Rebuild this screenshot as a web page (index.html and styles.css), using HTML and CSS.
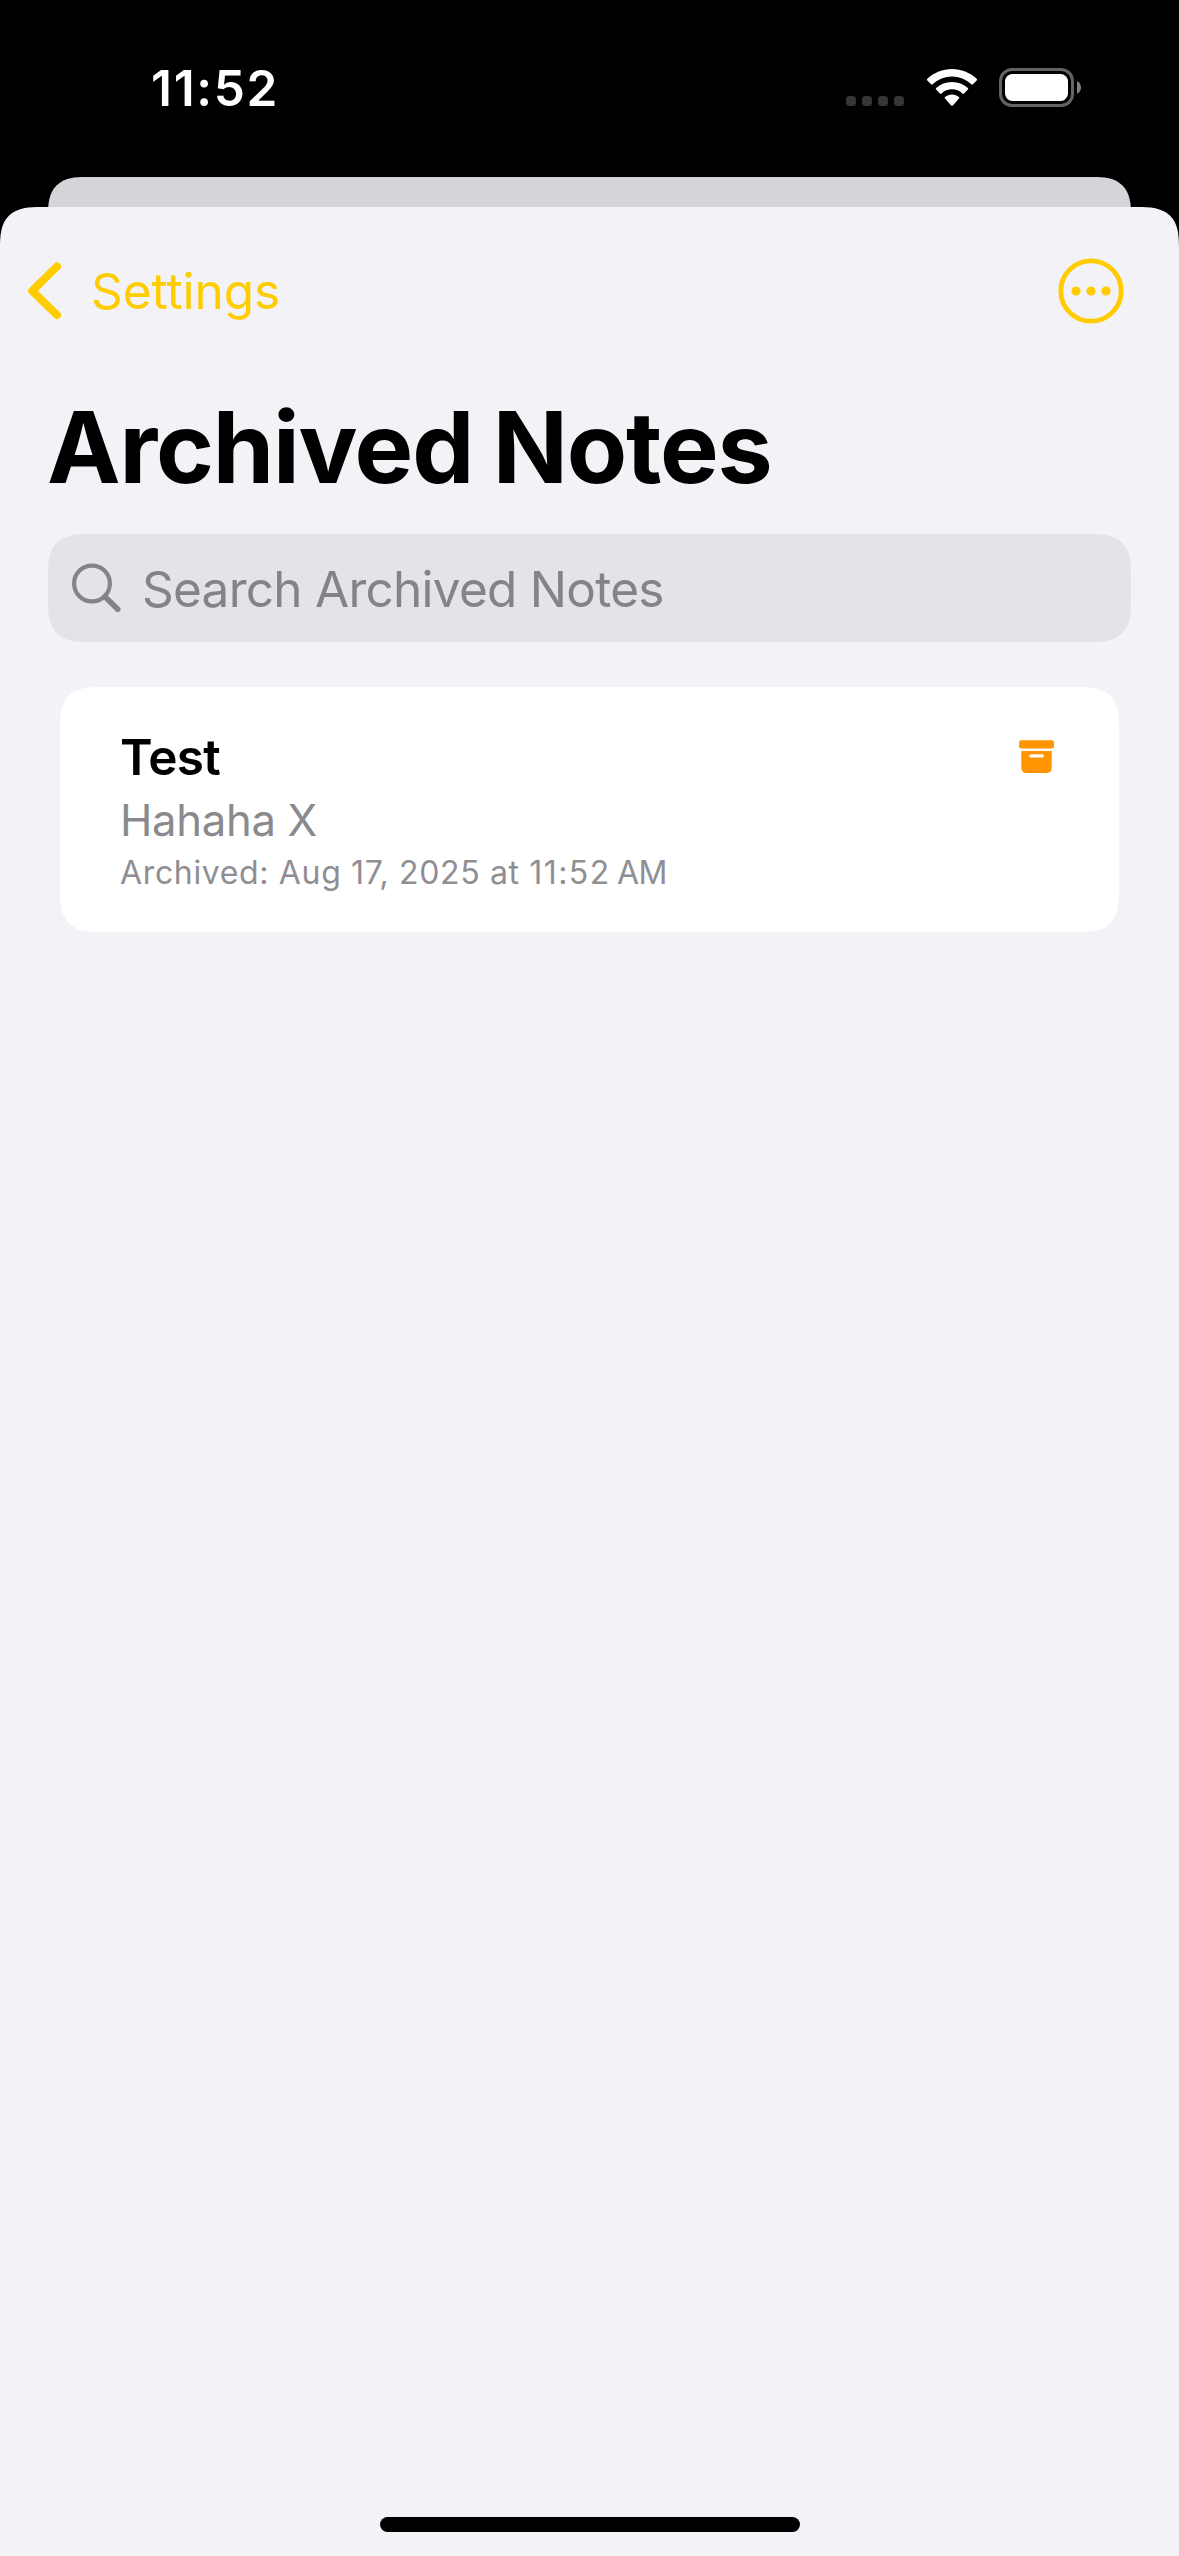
FILE: index.html
```html
<!DOCTYPE html>
<html lang="en">
<head>
<meta charset="utf-8">
<title>Archived Notes</title>
<link rel="stylesheet" href="styles.css">
</head>
<body>
<div class="screen">
  <header class="status-bar">
    <time class="clock">11:52</time>
    <div class="indicators">
      <div class="signal"><i></i><i></i><i></i><i></i></div>
      <svg class="wifi" width="52" height="38" viewBox="0 0 52 38" fill="#fff">
        <path d="M1.3 11.4Q0.5 10.6 1.3 9.8C8 3.5 17 0 26 0s18 3.5 24.7 9.8q.8.8 0 1.6l-3.8 3.8q-.8.8-1.6 0C40 10.400 33.200 7.400 26 7.400S12 10.400 6.700 15.200q-.8.8-1.600 0z"/>
        <path d="M10.100 20.500q-.8-.8 0-1.600C14.400 15 20 12.900 26 12.900s11.600 2.100 15.900 6q.8.8 0 1.600l-3.900 3.900q-.8.8-1.600 0C33.500 21.800 30 20.300 26 20.300s-7.500 1.500-10.400 4.100q-.8.8-1.600 0z"/>
        <path d="M19 29.400q-.8-.8.1-1.500C21 26.400 23.400 25.500 26 25.500s5 .9 6.900 2.400q.9.700.1 1.500L26.800 36.400q-.8.800-1.600 0z"/>
      </svg>
      <svg class="battery" width="84" height="41" viewBox="0 0 84 41">
        <rect x="2.500" y="2.500" width="72" height="36" rx="11.500" fill="none" stroke="#636363" stroke-width="3"/>
        <rect x="7" y="7" width="63" height="27" rx="7.500" fill="#fff"/>
        <path d="M79 14.200C81.600 15.200 83 17.600 83 20.400s-1.400 5.300-4 6.300z" fill="#808080"/>
      </svg>
    </div>
  </header>
  <div class="sheet-behind"></div>
  <main class="sheet">
    <nav class="nav-bar">
      <a class="back">
        <svg width="36" height="60" viewBox="0 0 36 60" fill="none" stroke="#ffcc00" stroke-width="8" stroke-linecap="round" stroke-linejoin="round"><path d="M31 5.500L6.200 29.800 31 54"/></svg>
        <span>Settings</span>
      </a>
      <svg class="more" width="66" height="66" viewBox="0 0 66 66" fill="#ffcc00">
        <circle cx="33" cy="33" r="30.200" fill="none" stroke="#ffcc00" stroke-width="4.800"/>
        <circle cx="18" cy="33" r="4.600"/><circle cx="33" cy="33" r="4.600"/><circle cx="48" cy="33" r="4.600"/>
      </svg>
    </nav>
    <h1 class="title">Archived Notes</h1>
    <div class="search">
      <svg width="50" height="50" viewBox="0 0 50 50" fill="none" stroke="#838388" stroke-linecap="round">
        <circle cx="21" cy="20.500" r="17.900" stroke-width="4.200"/><path d="M34 33.800L46.700 46.300" stroke-width="5.600"/>
      </svg>
      <span>Search Archived Notes</span>
    </div>
    <article class="note">
      <div class="note-text">
        <h2>Test</h2>
        <p class="preview">Hahaha X</p>
        <p class="date">Archived: Aug 17, 2025 at <span class="hour">11:52</span>&#8239;<span class="meridiem">AM</span></p>
      </div>
      <svg class="archive" width="36" height="34" viewBox="0 0 36 34" fill="#ff9500">
        <rect x="0" y="0.300" width="35" height="8.200" rx="2.200"/>
        <path fill-rule="evenodd" d="M2.300 11h30.400v16.500q0 5.500-5.500 5.500H7.800q-5.500 0-5.500-5.500zM12 14.200a1.700 1.700 0 0 0 0 3.400h11.200a1.700 1.700 0 0 0 0-3.400z"/>
      </svg>
    </article>
    <div class="home-indicator"></div>
  </main>
</div>
</body>
</html>
```
FILE: styles.css
```css
* { box-sizing: border-box; margin: 0; padding: 0; }
body {
  background: #000;
  font-family: Inter, "Liberation Sans", sans-serif;
}
svg { display: block; flex: none; }
.screen {
  display: flex;
  flex-direction: column;
  width: 1179px;
  height: 2556px;
  overflow: hidden;
}
.status-bar {
  display: flex;
  justify-content: space-between;
  align-items: flex-start;
  height: 177px;
  padding: 58px 97px 0 151px;
}
.clock {
  color: #fff;
  font-size: 49.5px;
  font-weight: 600;
  line-height: 60px;
  letter-spacing: 1.7px;
}
.indicators { display: flex; padding-top: 9px; }
.signal { display: flex; gap: 6px; padding: 29px 22px 0 0; }
.signal i { width: 10px; height: 10px; border-radius: 3.5px; background: #353535; }
.wifi { margin-top: 2px; }
.battery { margin-left: 20px; }
.sheet-behind {
  flex: none;
  height: 46px;
  margin: 0 48px -16px;
  background: #d4d4d9;
  border-radius: 38px 38px 0 0;
  corner-shape: superellipse(1.45);
}
.sheet {
  display: flex;
  flex-direction: column;
  flex: 1;
  background: #f2f2f7;
  border-radius: 42px 42px 0 0;
  corner-shape: superellipse(1.55);
}
.nav-bar {
  display: flex;
  align-items: center;
  justify-content: space-between;
  height: 66px;
  margin-top: 51px;
  padding: 0 55px 0 26px;
}
.more { margin-top: -1px; }
.back {
  display: flex;
  align-items: center;
  gap: 29px;
  color: #fc0;
  font-size: 49.5px;
  line-height: 60px;
  letter-spacing: -0.05px;
}
.title {
  margin: 63px 47px 0;
  font-size: 98.6px;
  font-weight: 700;
  line-height: 120px;
  letter-spacing: -1.2px;
  word-spacing: -2.5px;
}
.search {
  display: flex;
  align-items: center;
  gap: 21px;
  height: 108px;
  margin: 27px 48px 0;
  padding-left: 23px;
  background: #e3e3e9;
  border-radius: 42px;
  corner-shape: superellipse(1.55);
  color: #838388;
  font-size: 49.5px;
  line-height: 60px;
  letter-spacing: -0.74px;
}
.search span { padding-top: 1px; }
.note {
  display: flex;
  justify-content: space-between;
  height: 245px;
  margin: 45px 60px 0;
  padding: 40px 64px 0 60px;
  background: #fff;
  border-radius: 42px;
  corner-shape: superellipse(1.55);
}
.note h2 {
  font-size: 49.5px;
  font-weight: 600;
  line-height: 60px;
  letter-spacing: -0.65px;
}
.preview {
  margin-top: 8px;
  color: #8a8a8e;
  font-size: 43.6px;
  line-height: 52px;
  letter-spacing: -0.3px;
}
.date {
  margin-top: 5px;
  color: #8e8e93;
  font-size: 32px;
  line-height: 42px;
  letter-spacing: 0.65px;
}
.date .hour { letter-spacing: 1.4px; }
.date .meridiem { letter-spacing: -0.58px; }
.archive { margin-top: 13px; }
.home-indicator {
  width: 420px;
  height: 15px;
  margin: auto auto 24px;
  border-radius: 8px;
  background: #000;
}
```
